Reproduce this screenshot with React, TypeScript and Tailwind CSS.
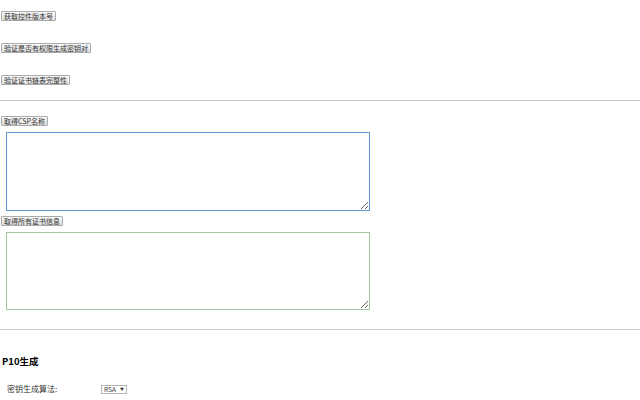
import { ReactNode } from "react"

function Btn({ children, className = "" }: { children: ReactNode; className?: string }) {
  return (
    <button
      className={
        "h-[10px] px-[2px] border border-[#ababab] rounded-[1px] bg-gradient-to-b from-[#f8f8f8] to-[#e0e0e0] text-[7px] leading-[8px] text-[#333] whitespace-nowrap " +
        className
      }
    >
      {children}
    </button>
  )
}

export default function App() {
  return (
    <div className="w-[640px] h-[400px] overflow-hidden bg-white font-['Noto_Sans_CJK_SC','Microsoft_YaHei',sans-serif] text-black">
      <div className="flex flex-col items-start pt-[11px] pl-[1px]">
        <Btn>获取控件版本号</Btn>
        <Btn className="mt-[22px]">验证是否有权限生成密钥对</Btn>
        <Btn className="mt-[22px]">验证证书链表完整性</Btn>
      </div>
      <hr className="mt-[15px] border-0 border-t border-[#c8c8c8]" />
      <div className="flex flex-col items-start pl-[1px]">
        <Btn className="mt-[15px]">取得CSP名称</Btn>
        <textarea className="mt-[6px] ml-[5px] w-[364px] h-[79px] border border-[#5e9ad0] resize-y outline-none" />
        <Btn className="mt-[5px]">取得所有证书信息</Btn>
        <textarea className="mt-[6px] ml-[5px] w-[364px] h-[78px] border border-[#a3c7a3] resize-y outline-none" />
      </div>
      <hr className="mt-[19px] border-0 border-t border-[#c8c8c8]" />
      <h3 className="mt-[25px] ml-[2px] text-[9.5px] leading-[12px] font-bold">P10生成</h3>
      <div className="mt-[17px] flex items-center">
        <span className="ml-[7px] w-[94px] text-[8px] leading-[10px] text-[#333]">密钥生成算法:</span>
        <div className="h-[9px] w-[26px] px-[2px] border border-[#b5b5b5] flex items-center justify-between text-[6.5px] leading-[7px] text-[#333]">
          <span>RSA</span>
          <span className="text-[4px] leading-[4px]">▼</span>
        </div>
      </div>
    </div>
  )
}
